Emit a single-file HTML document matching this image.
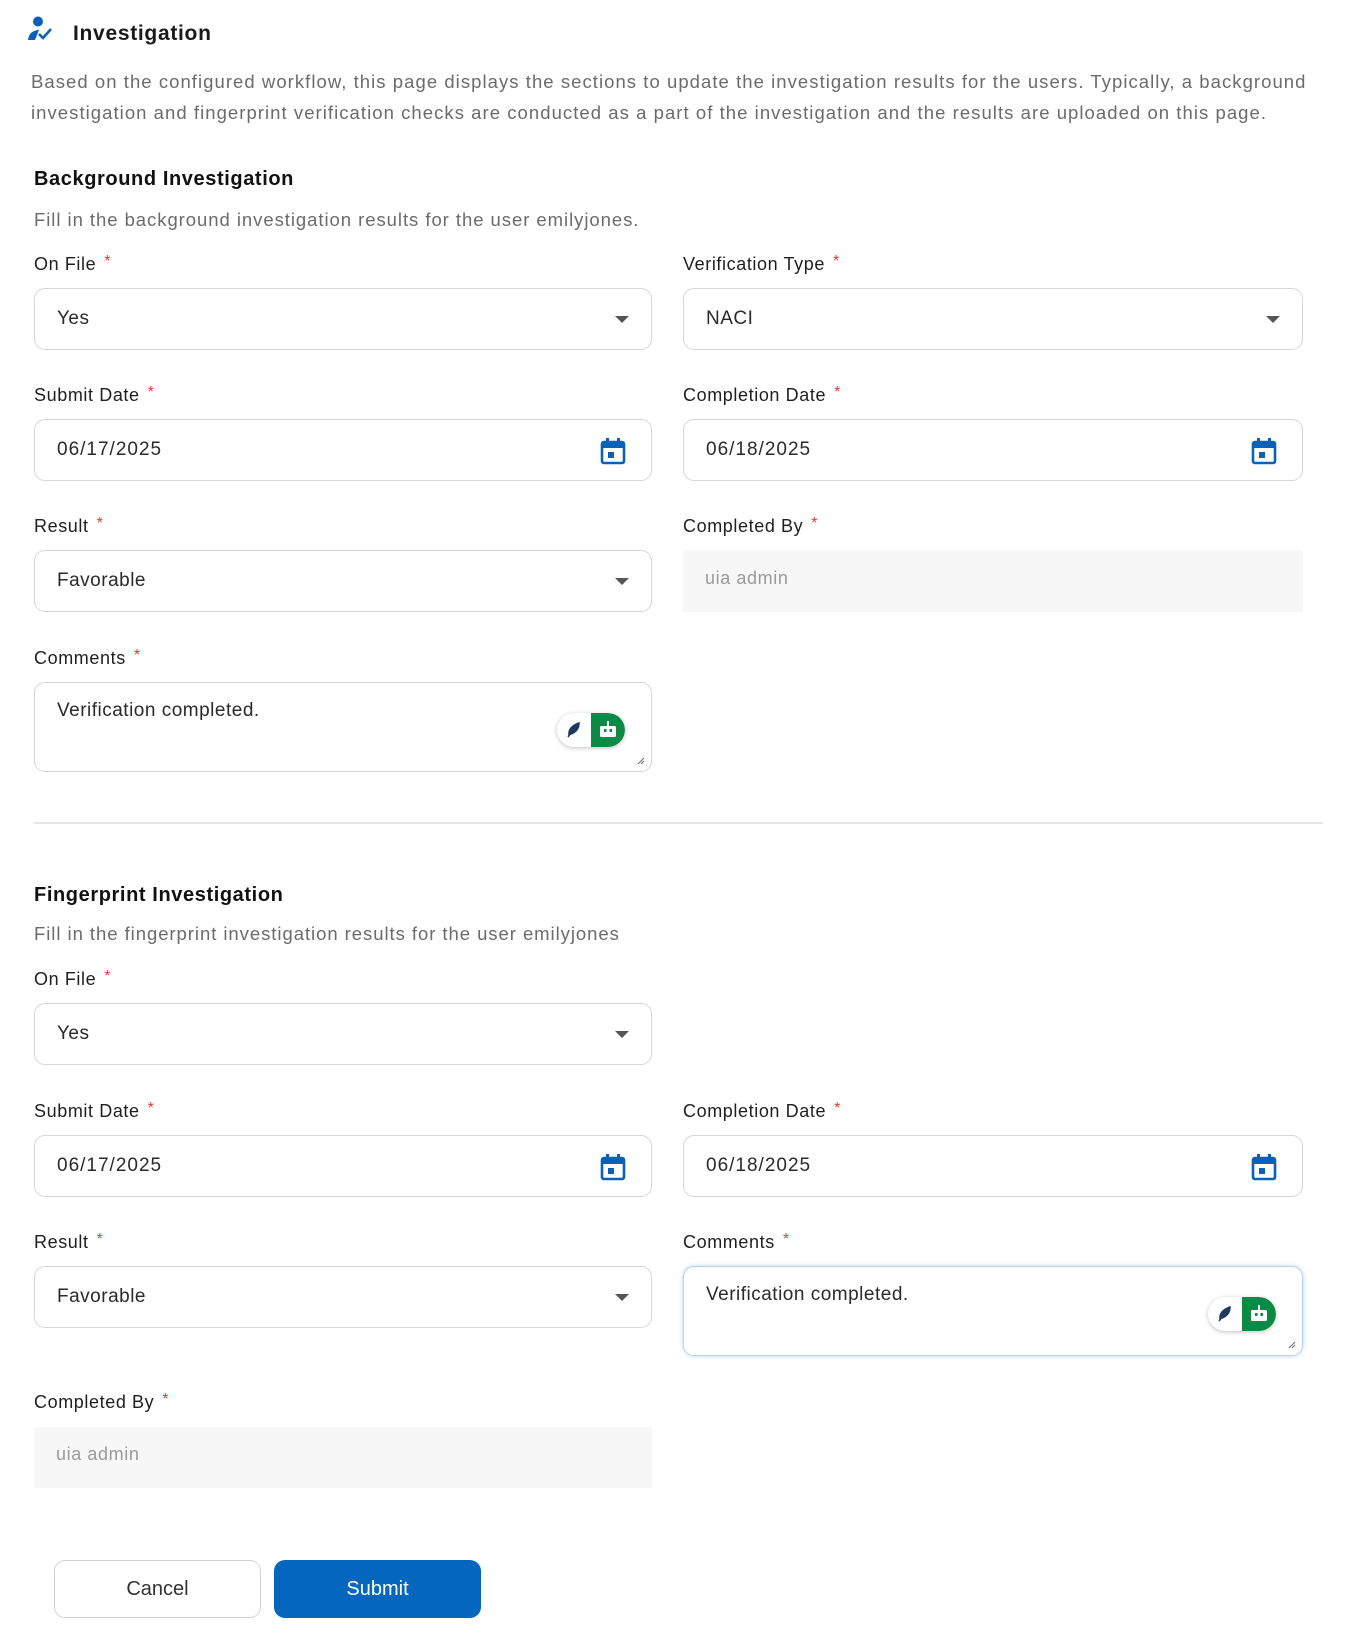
<!DOCTYPE html>
<html><head><meta charset="utf-8">
<style>
*{box-sizing:border-box;margin:0;padding:0}
body{width:1350px;height:1634px;background:#fff;font-family:"Liberation Sans",sans-serif;color:#1f1f1f;position:relative;overflow:hidden}
.a{position:absolute}
.t{position:absolute;white-space:nowrap}
.lbl{font-size:18px;color:#1f1f1f;transform:translateY(-50%);letter-spacing:0.6px}
.lbl b{color:#e53935;font-weight:normal;margin-left:8px;font-size:16px;vertical-align:4px}
.box{position:absolute;border:1.5px solid #d4d6d9;border-radius:11px;background:#fff;font-size:19px;color:#2a2a2a;padding-left:22px;display:flex;align-items:center;letter-spacing:0.5px}
.dis{position:absolute;background:#f7f7f7;font-size:18px;color:#9a9a9a;padding-left:22px;display:flex;align-items:center;border-radius:2px;letter-spacing:0.6px}
.car{position:absolute;right:22px;top:50%;margin-top:-3px;width:0;height:0;border-left:7px solid transparent;border-right:7px solid transparent;border-top:7px solid #555}
.cal{position:absolute;right:25px;top:50%;margin-top:-12px}
.ta{align-items:flex-start;padding-top:17px}
.badge{position:absolute;right:26px;bottom:24px;width:68px;height:34px;border-radius:17px;box-shadow:0 1px 4px rgba(0,0,0,.25);overflow:hidden;background:#fff}
.badge .g{position:absolute;right:0;top:0;width:34px;height:34px;background:#0b8a46;border-radius:0 17px 17px 0}
.rs{position:absolute;right:6px;bottom:6px}
.desc{font-size:18.5px;color:#6b6b6b;letter-spacing:0.95px}
</style></head><body>
<svg class="a" style="left:27px;top:16px" width="27" height="26" viewBox="0 0 27 26">
<circle cx="11" cy="5.5" r="5" fill="#0a62b8"/>
<path d="M1 24 Q2 15 11 14 L12 14 L8 24 Z" fill="#0a62b8"/>
<path d="M12 18 L16 22 L24 13" stroke="#0a62b8" stroke-width="2.6" fill="none"/>
</svg>
<div class="t" style="left:73px;top:22px;font-size:21px;font-weight:bold;color:#1a1a1a;letter-spacing:0.7px">Investigation</div>
<div class="t" style="left:31px;top:66px;font-size:18.5px;color:#6b6b6b;line-height:31px;letter-spacing:1.05px">Based on the configured workflow, this page displays the sections to update the investigation results for the users. Typically, a background<br>investigation and fingerprint verification checks are conducted as a part of the investigation and the results are uploaded on this page.</div>

<div class="t" style="left:34px;top:168px;font-size:20px;font-weight:bold;color:#111;letter-spacing:0.6px">Background Investigation</div>
<div class="t desc" style="left:34px;top:209px">Fill in the background investigation results for the user emilyjones.</div>

<div class="t lbl" style="left:34px;top:264px">On File<b>*</b></div>
<div class="box" style="left:34px;top:288px;width:618px;height:62px">Yes<span class="car"></span></div>
<div class="t lbl" style="left:683px;top:264px">Verification Type<b>*</b></div>
<div class="box" style="left:683px;top:288px;width:620px;height:62px">NACI<span class="car"></span></div>

<div class="t lbl" style="left:34px;top:395px">Submit Date<b>*</b></div>
<div class="box" style="left:34px;top:419px;width:618px;height:62px;letter-spacing:1px">06/17/2025<svg class="cal" width="26" height="27" viewBox="0 0 26 27"><rect x="2" y="4" width="22" height="21" rx="2" fill="none" stroke="#0a62b8" stroke-width="2.6"/><rect x="2" y="4" width="22" height="6" fill="#0a62b8"/><rect x="6" y="0" width="3" height="6" fill="#0a62b8"/><rect x="17" y="0" width="3" height="6" fill="#0a62b8"/><rect x="8" y="14" width="6" height="6" fill="#0a62b8"/></svg></div>
<div class="t lbl" style="left:683px;top:395px">Completion Date<b>*</b></div>
<div class="box" style="left:683px;top:419px;width:620px;height:62px;letter-spacing:1px">06/18/2025<svg class="cal" width="26" height="27" viewBox="0 0 26 27"><rect x="2" y="4" width="22" height="21" rx="2" fill="none" stroke="#0a62b8" stroke-width="2.6"/><rect x="2" y="4" width="22" height="6" fill="#0a62b8"/><rect x="6" y="0" width="3" height="6" fill="#0a62b8"/><rect x="17" y="0" width="3" height="6" fill="#0a62b8"/><rect x="8" y="14" width="6" height="6" fill="#0a62b8"/></svg></div>

<div class="t lbl" style="left:34px;top:526px">Result<b>*</b></div>
<div class="box" style="left:34px;top:550px;width:618px;height:62px">Favorable<span class="car"></span></div>
<div class="t lbl" style="left:683px;top:526px">Completed By<b>*</b></div>
<div class="dis" style="left:683px;top:550px;width:620px;height:62px;padding-bottom:6px">uia admin</div>

<div class="t lbl" style="left:34px;top:658px">Comments<b>*</b></div>
<div class="box ta" style="left:34px;top:682px;width:618px;height:90px">Verification completed.
<div class="badge"><svg class="a" style="left:8px;top:8px" width="18" height="18" viewBox="0 0 18 18"><path d="M3 16 L9 8 M4 14 Q3 6 14 2 Q14 10 6 13 Z" fill="#1f3a5f" stroke="#1f3a5f" stroke-width="1.5"/></svg><div class="g"><svg class="a" style="left:7px;top:6px" width="20" height="20" viewBox="0 0 20 20"><rect x="2" y="7" width="16" height="11" rx="1.5" fill="#fff"/><rect x="9" y="2" width="2" height="5" fill="#fff"/><rect x="6" y="10" width="2.5" height="3" fill="#0b8a46"/><rect x="11.5" y="10" width="2.5" height="3" fill="#0b8a46"/></svg></div></div>
<svg class="rs" width="8" height="8" viewBox="0 0 8 8"><path d="M1 7 L7 1 M4 7 L7 4" stroke="#666" stroke-width="1"/></svg></div>

<div class="a" style="left:34px;top:822px;width:1289px;height:2px;background:#e4e6e8"></div>

<div class="t" style="left:34px;top:884px;font-size:20px;font-weight:bold;color:#111;letter-spacing:0.6px">Fingerprint Investigation</div>
<div class="t desc" style="left:34px;top:923px">Fill in the fingerprint investigation results for the user emilyjones</div>

<div class="t lbl" style="left:34px;top:979px">On File<b>*</b></div>
<div class="box" style="left:34px;top:1003px;width:618px;height:62px">Yes<span class="car"></span></div>

<div class="t lbl" style="left:34px;top:1111px">Submit Date<b>*</b></div>
<div class="box" style="left:34px;top:1135px;width:618px;height:62px;letter-spacing:1px">06/17/2025<svg class="cal" width="26" height="27" viewBox="0 0 26 27"><rect x="2" y="4" width="22" height="21" rx="2" fill="none" stroke="#0a62b8" stroke-width="2.6"/><rect x="2" y="4" width="22" height="6" fill="#0a62b8"/><rect x="6" y="0" width="3" height="6" fill="#0a62b8"/><rect x="17" y="0" width="3" height="6" fill="#0a62b8"/><rect x="8" y="14" width="6" height="6" fill="#0a62b8"/></svg></div>
<div class="t lbl" style="left:683px;top:1111px">Completion Date<b>*</b></div>
<div class="box" style="left:683px;top:1135px;width:620px;height:62px;letter-spacing:1px">06/18/2025<svg class="cal" width="26" height="27" viewBox="0 0 26 27"><rect x="2" y="4" width="22" height="21" rx="2" fill="none" stroke="#0a62b8" stroke-width="2.6"/><rect x="2" y="4" width="22" height="6" fill="#0a62b8"/><rect x="6" y="0" width="3" height="6" fill="#0a62b8"/><rect x="17" y="0" width="3" height="6" fill="#0a62b8"/><rect x="8" y="14" width="6" height="6" fill="#0a62b8"/></svg></div>

<div class="t lbl" style="left:34px;top:1242px">Result<b>*</b></div>
<div class="box" style="left:34px;top:1266px;width:618px;height:62px">Favorable<span class="car"></span></div>
<div class="t lbl" style="left:683px;top:1242px">Comments<b>*</b></div>
<div class="box ta" style="left:683px;top:1266px;width:620px;height:90px;border-color:#b9d4f0;box-shadow:0 0 4px rgba(60,130,220,.35)">Verification completed.
<div class="badge"><svg class="a" style="left:8px;top:8px" width="18" height="18" viewBox="0 0 18 18"><path d="M3 16 L9 8 M4 14 Q3 6 14 2 Q14 10 6 13 Z" fill="#1f3a5f" stroke="#1f3a5f" stroke-width="1.5"/></svg><div class="g"><svg class="a" style="left:7px;top:6px" width="20" height="20" viewBox="0 0 20 20"><rect x="2" y="7" width="16" height="11" rx="1.5" fill="#fff"/><rect x="9" y="2" width="2" height="5" fill="#fff"/><rect x="6" y="10" width="2.5" height="3" fill="#0b8a46"/><rect x="11.5" y="10" width="2.5" height="3" fill="#0b8a46"/></svg></div></div>
<svg class="rs" width="8" height="8" viewBox="0 0 8 8"><path d="M1 7 L7 1 M4 7 L7 4" stroke="#666" stroke-width="1"/></svg></div>

<div class="t lbl" style="left:34px;top:1402px">Completed By<b>*</b></div>
<div class="dis" style="left:34px;top:1427px;width:618px;height:61px;padding-bottom:6px">uia admin</div>

<div class="a" style="left:54px;top:1560px;width:207px;height:58px;border:1.5px solid #cfd2d5;border-radius:11px;font-size:20px;color:#333;display:flex;align-items:center;justify-content:center">Cancel</div>
<div class="a" style="left:274px;top:1560px;width:207px;height:58px;background:#0466bc;border-radius:11px;font-size:20px;color:#fff;display:flex;align-items:center;justify-content:center">Submit</div>
</body></html>
